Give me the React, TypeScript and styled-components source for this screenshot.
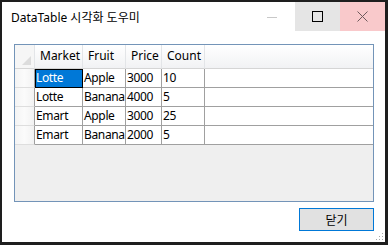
import React from 'react'
import styled, { createGlobalStyle } from 'styled-components'

const GlobalStyle = createGlobalStyle`
body {
    margin: 0;
    background: #1e1e1e;
    font-family: "Noto Sans", "Noto Sans CJK KR", sans-serif;
}
`

const Window = styled.div`
position : relative;
margin : 2px 0 0 2px;
width : 383px;
height : 240px;
background : #ffffff;
display : flex;
flex-direction : column;
`
const TitleBar = styled.div`
height : 29px;
display : flex;
align-items : stretch;
`
const Title = styled.div`
flex : 1;
display : flex;
align-items : center;
padding-left : 9px;
font-size : 12px;
color : #000;
font-family: "Noto Sans", "Noto Sans CJK KR", sans-serif;
`
const CaptionBtn = styled.div<{ $bg: string, $w: number }>`
width : ${p => p.$w}px;
background : ${p => p.$bg};
display : flex;
align-items : center;
justify-content : center;
`
const Body = styled.div`
flex : 1;
display : flex;
flex-direction : column;
padding : 13px 11px 0 12px;
`
const Grid = styled.div`
height : 158px;
border : 1px solid #7394b8;
background : #efefef;
box-sizing : border-box;
display : flex;
flex-direction : column;
overflow : hidden;
`
const Row = styled.div<{ $h: number }>`
display : flex;
height : ${p => p.$h}px;
flex-shrink : 0;
`
const HeadCell = styled.div<{ $w?: number }>`
width : ${p => p.$w ? p.$w + 'px' : 'auto'};
flex : ${p => p.$w ? 'none' : '1'};
box-sizing : border-box;
background : linear-gradient(#ffffff, #f1f2f4);
border-right : ${p => p.$w ? '1px solid #e3e5e8' : 'none'};
border-bottom : 1px solid #d5d5d5;
font-size : 12px;
line-height : 22px;
padding-left : 5px;
white-space : nowrap;
`
const Corner = styled.div`
width : 20px;
position : relative;
box-sizing : border-box;
background : #f6f6f6;
border-right : 1px solid #e3e5e8;
border-bottom : 1px solid #d5d5d5;
`
const Triangle = styled.div`
position : absolute;
right : 3px;
bottom : 3px;
width : 0;
height : 0;
border-left : 9px solid transparent;
border-bottom : 9px solid #dcdcdc;
`
const RowHead = styled.div`
width : 20px;
box-sizing : border-box;
background : linear-gradient(90deg, #f4f4f4, #fbfbfb 50%, #f2f2f2);
border-right : 1px solid #a0a0a0;
border-bottom : 1px solid #dedede;
`
const Cell = styled.div<{ $w?: number, $selected?: boolean }>`
width : ${p => p.$w ? p.$w + 'px' : 'auto'};
flex : ${p => p.$w ? 'none' : '1'};
box-sizing : border-box;
background : ${p => p.$selected ? '#0078d7' : '#ffffff'};
color : ${p => p.$selected ? '#ffffff' : '#000000'};
border-right : ${p => p.$w ? '1px solid #a0a0a0' : 'none'};
border-bottom : 1px solid #a0a0a0;
outline : ${p => p.$selected ? '1px solid #000' : 'none'};
outline-offset : -1px;
font-size : 12px;
letter-spacing : -0.35px;
line-height : 18px;
padding-left : 1px;
white-space : nowrap;
overflow : hidden;
`
const Footer = styled.div`
display : flex;
justify-content : flex-end;
padding-top : 6px;
`
const Button = styled.button`
width : 75px;
height : 23px;
box-sizing : border-box;
border : 1px solid #0078d7;
background : #e1e1e1;
font-family: "Noto Sans", "Noto Sans CJK KR", sans-serif;
font-size : 12px;
color : #000;
padding : 0;
`
const Grip = styled.svg`
position : absolute;
right : 1px;
bottom : 1px;
`

const widths = [48, 43, 36, 43]
const columns = ['Market', 'Fruit', 'Price', 'Count']
const data = [
    ['Lotte', 'Apple', '3000', '10'],
    ['Lotte', 'Banana', '4000', '5'],
    ['Emart', 'Apple', '3000', '25'],
    ['Emart', 'Banana', '2000', '5'],
]

export default function App() {
    return (
        <>
            <GlobalStyle />
            <Window>
                <TitleBar>
                    <Title>DataTable 시각화 도우미</Title>
                    <CaptionBtn $bg="#ffffff" $w={46}>
                        <svg width="10" height="10"><line x1="0" y1="5.5" x2="10" y2="5.5" stroke="#c8c8c8" /></svg>
                    </CaptionBtn>
                    <CaptionBtn $bg="#e5e5e5" $w={45}>
                        <svg width="11" height="11"><rect x="0.5" y="0.5" width="10" height="10" fill="none" stroke="#000" /></svg>
                    </CaptionBtn>
                    <CaptionBtn $bg="#f9c9cb" $w={45}>
                        <svg width="11" height="11"><path d="M0.5 0.5 L10.5 10.5 M10.5 0.5 L0.5 10.5" stroke="#6e5a5c" /></svg>
                    </CaptionBtn>
                </TitleBar>
                <Body>
                    <Grid>
                        <Row $h={24}>
                            <Corner><Triangle /></Corner>
                            {columns.map((c, i) => <HeadCell key={c} $w={widths[i]}>{c}</HeadCell>)}
                            <HeadCell />
                        </Row>
                        {data.map((r, ri) => (
                            <Row key={ri} $h={19}>
                                <RowHead />
                                {r.map((v, ci) => <Cell key={ci} $w={widths[ci]} $selected={ri === 0 && ci === 0}>{v}</Cell>)}
                                <Cell />
                            </Row>
                        ))}
                    </Grid>
                    <Footer>
                        <Button>닫기</Button>
                    </Footer>
                </Body>
                <Grip width="10" height="10">
                    {[[8, 0], [8, 3], [5, 3], [8, 6], [5, 6], [2, 6]].map(([x, y], i) => (
                        <rect key={i} x={x} y={y + 2} width="1" height="1" fill="#a8a8a8" />
                    ))}
                </Grip>
            </Window>
        </>
    )
}
